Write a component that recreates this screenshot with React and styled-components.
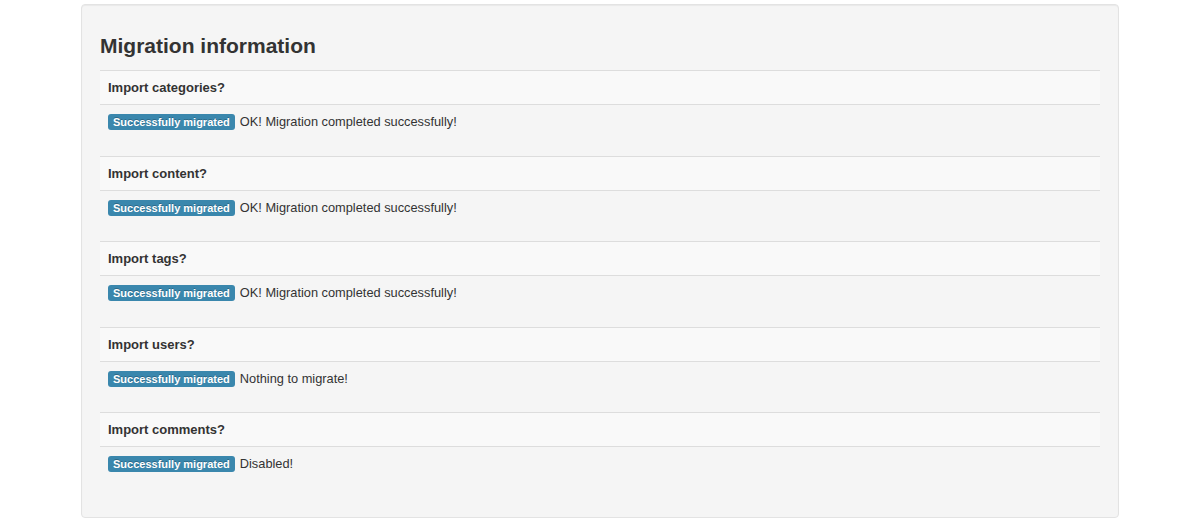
import React from "react";
import styled, { createGlobalStyle } from "styled-components";

const GlobalStyle = createGlobalStyle`
  body {
    margin: 0;
    background: #fff;
    font-family: "Liberation Sans", Arial, sans-serif;
    color: #333;
  }
`;

const Well = styled.div`
  box-sizing: border-box;
  width: 1038px;
  margin: 4px auto 0;
  padding: 19px 18px;
  background: #f5f5f5;
  border: 1px solid #e3e3e3;
  border-radius: 4px;
  box-shadow: inset 0 1px 1px rgba(0, 0, 0, 0.05);
`;

const Title = styled.h3`
  margin: 10px 0 12px;
  font-size: 21px;
  line-height: 24px;
  font-weight: 700;
  color: #333;
`;

const Table = styled.div`
  display: flex;
  flex-direction: column;
`;

const HeadRow = styled.div`
  border-top: 1px solid #dddddd;
  background: #f9f9f9;
  padding: 8px;
  font-size: 13px;
  line-height: 17px;
  font-weight: 700;
`;

const BodyRow = styled.div`
  border-top: 1px solid #dddddd;
  padding: 8px 8px 24.5px;
  font-size: 12.8px;
  line-height: 18px;
  display: flex;
  align-items: center;
  gap: 5px;
`;

const Badge = styled.span`
  display: inline-block;
  background: #3a87ad;
  color: #fff;
  font-size: 11px;
  font-weight: 700;
  line-height: 14px;
  padding: 1px 5px;
  border-radius: 3px;
  text-shadow: 0 -1px 0 rgba(0, 0, 0, 0.25);
`;

const rows = [
  { q: "Import categories?", msg: "OK! Migration completed successfully!" },
  { q: "Import content?", msg: "OK! Migration completed successfully!" },
  { q: "Import tags?", msg: "OK! Migration completed successfully!" },
  { q: "Import users?", msg: "Nothing to migrate!" },
  { q: "Import comments?", msg: "Disabled!" },
];

export default function App() {
  return (
    <>
      <GlobalStyle />
      <Well>
        <Title>Migration information</Title>
        <Table>
          {rows.map((r) => (
            <React.Fragment key={r.q}>
              <HeadRow>{r.q}</HeadRow>
              <BodyRow>
                <Badge>Successfully migrated</Badge>
                <span>{r.msg}</span>
              </BodyRow>
            </React.Fragment>
          ))}
        </Table>
      </Well>
    </>
  );
}
